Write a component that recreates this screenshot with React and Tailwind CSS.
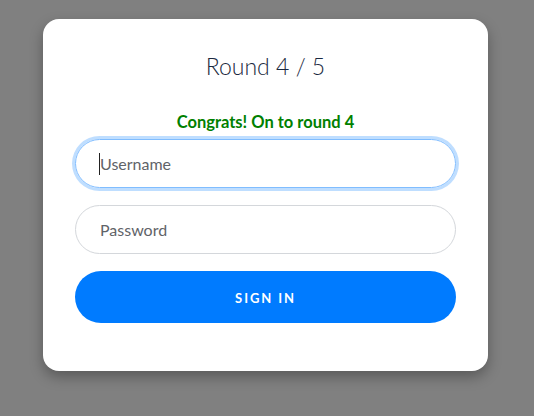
export default function App() {
  return (
    <div className="min-h-[416px] w-full bg-[#808080] flex pl-[43px] pt-[19px] font-['Lato',sans-serif]">
      <div className="w-[445px] h-[352px] bg-white rounded-[16px] shadow-[0_6px_14px_rgba(0,0,0,0.3)] px-8 pt-[33px] flex flex-col">
        <h1 className="text-center text-[23px] leading-[28px] font-light text-[#1a2940]">Round 4 / 5</h1>
        <p className="mt-[32px] text-center text-[16.5px] leading-[20px] font-bold text-[#008000]">
          Congrats! On to round 4
        </p>
        <div className="relative mt-[7px]">
          <input
            type="text"
            placeholder="Username"
            className="w-full h-[49px] rounded-full border border-[#80bdff] shadow-[0_0_0_3px_rgba(0,123,255,0.25)] pl-6 pr-6 text-[16px] text-[#495057] placeholder:text-[#5f6368] outline-none"
          />
          <span className="absolute left-6 top-[14px] w-px h-[22px] bg-[#222]" />
        </div>
        <input
          type="password"
          placeholder="Password"
          className="mt-[17px] w-full h-[49px] rounded-full border border-[#d4d7db] pl-6 pr-6 text-[16px] text-[#495057] placeholder:text-[#5f6368] outline-none"
        />
        <button className="mt-[17px] w-full h-[52px] pt-[3px] rounded-full bg-[#007bff] text-white text-[13px] font-bold tracking-[1.9px]">
          SIGN IN
        </button>
      </div>
    </div>
  );
}
